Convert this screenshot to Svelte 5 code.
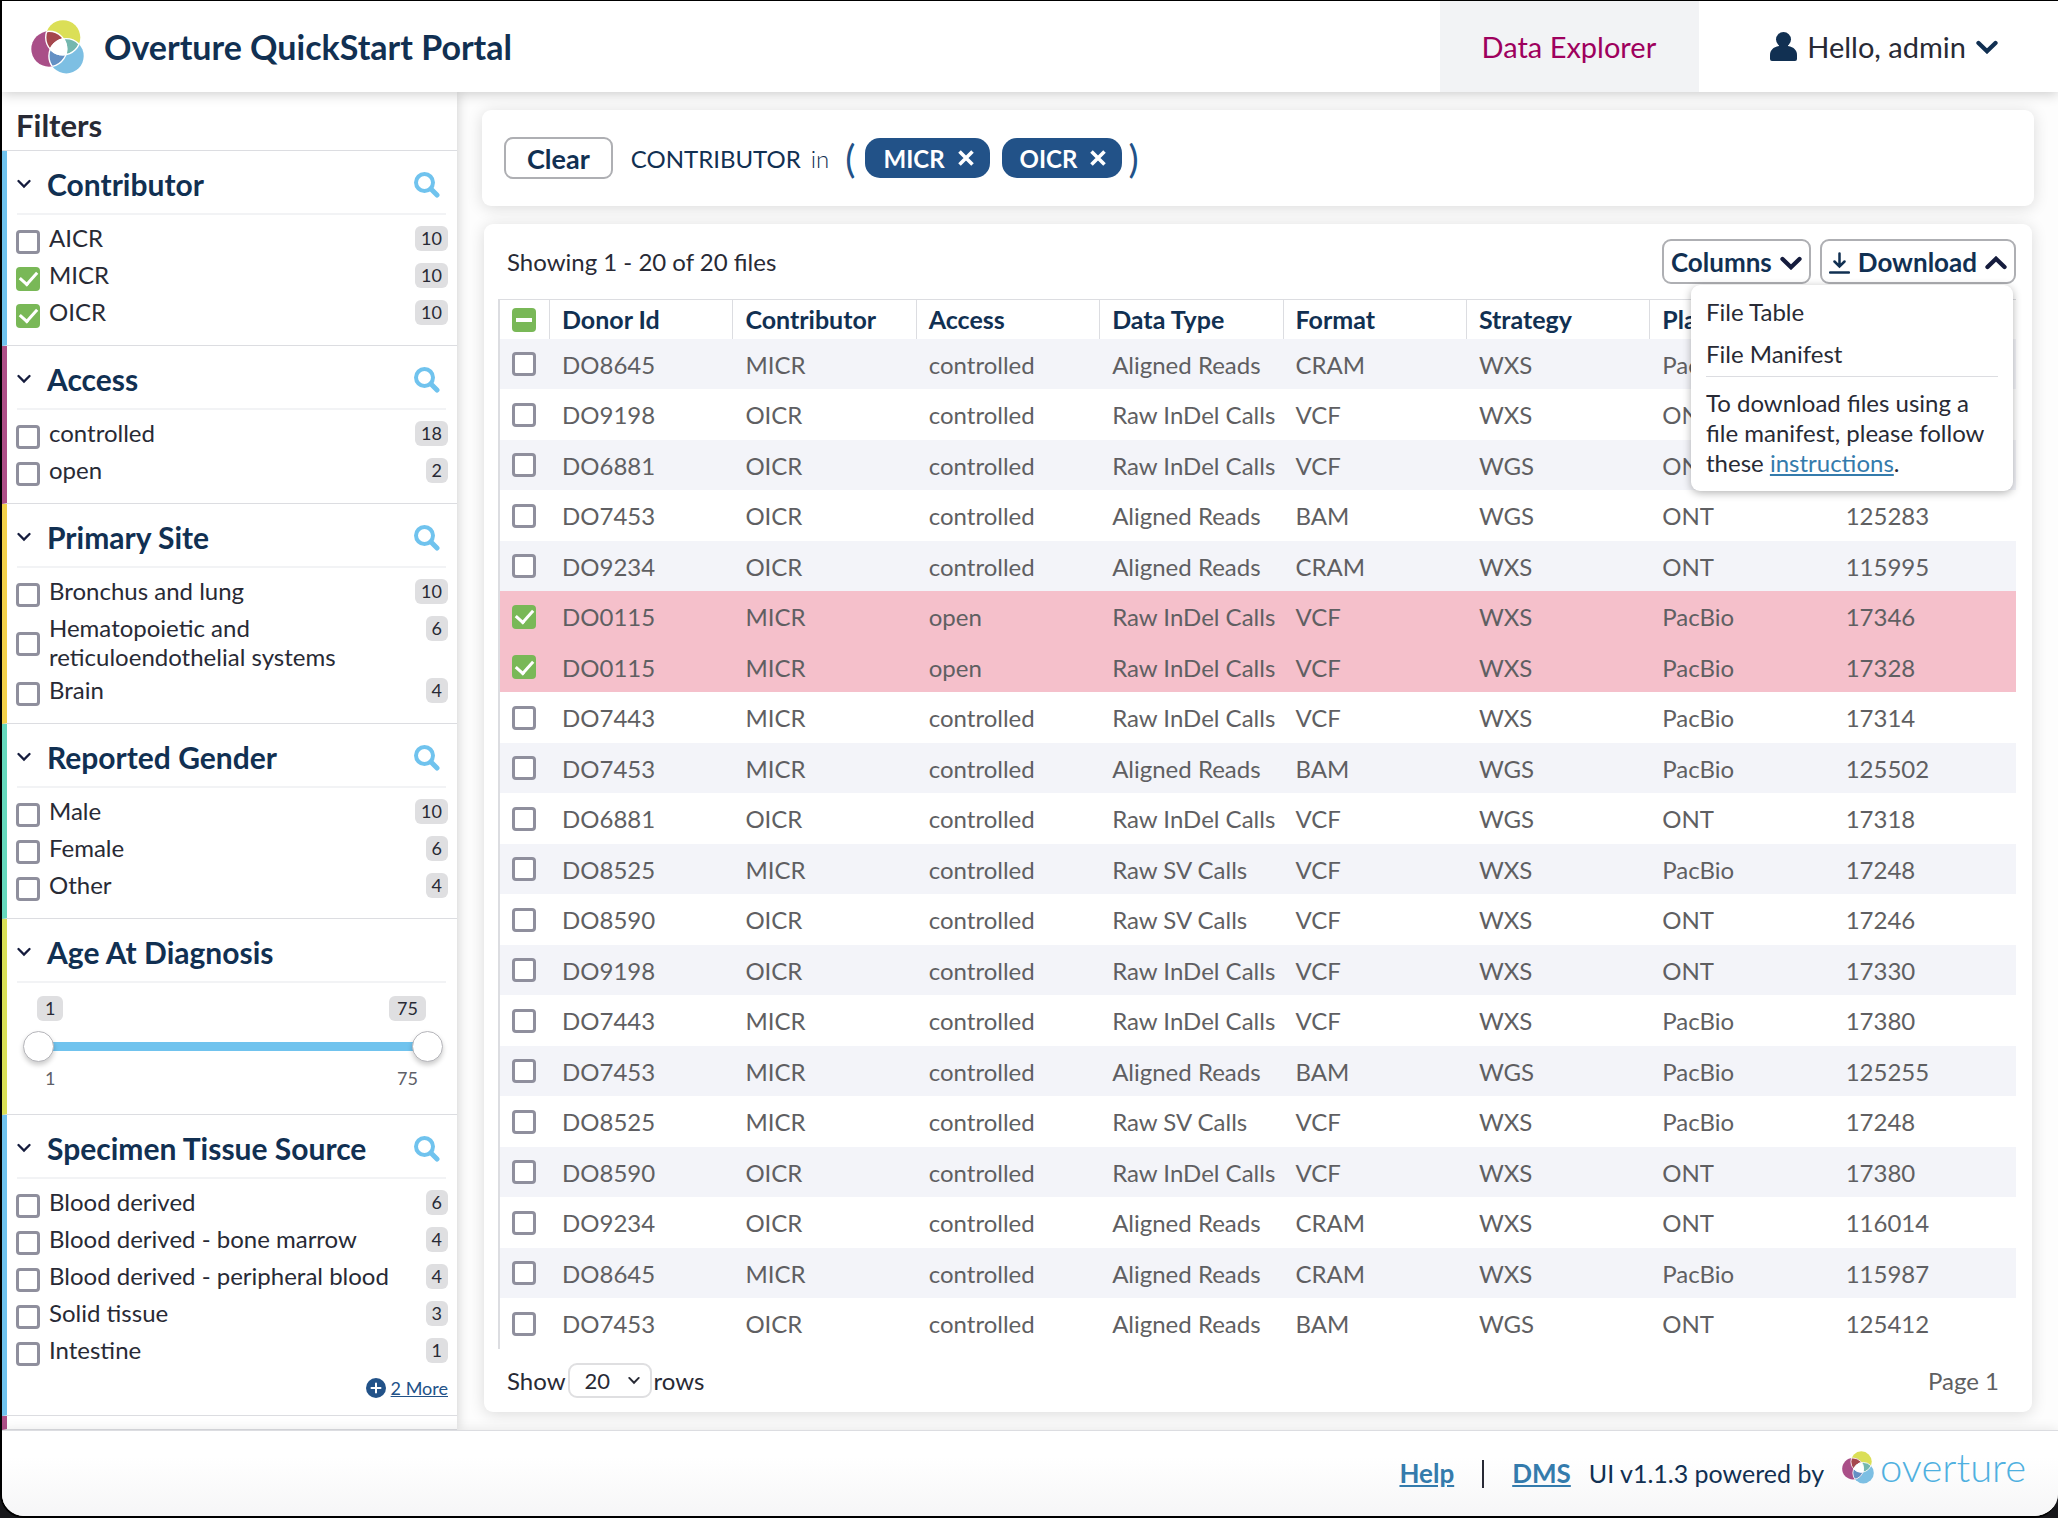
<script>
  const sections = [
    { name: 'Contributor', color: 'blue', items: [['AICR', 10, false], ['MICR', 10, true], ['OICR', 10, true]] },
    { name: 'Access', color: 'magenta', items: [['controlled', 18, false], ['open', 2, false]] },
    { name: 'Primary Site', color: 'gold', items: [['Bronchus and lung', 10, false], ['Hematopoietic and reticuloendothelial systems', 6, false], ['Brain', 4, false]] },
    { name: 'Reported Gender', color: 'teal', items: [['Male', 10, false], ['Female', 6, false], ['Other', 4, false]] },
    { name: 'Age At Diagnosis', color: 'lime', range: [1, 75] },
    { name: 'Specimen Tissue Source', color: 'blue', more: 2, items: [['Blood derived', 6, false], ['Blood derived - bone marrow', 4, false], ['Blood derived - peripheral blood', 4, false], ['Solid tissue', 3, false], ['Intestine', 1, false]] }
  ];

  const columns = ['Donor Id', 'Contributor', 'Access', 'Data Type', 'Format', 'Strategy', 'Platform', 'Size'];

  const rows = [
    ['DO8645', 'MICR', 'controlled', 'Aligned Reads', 'CRAM', 'WXS', 'PacBio', ''],
    ['DO9198', 'OICR', 'controlled', 'Raw InDel Calls', 'VCF', 'WXS', 'ONT', ''],
    ['DO6881', 'OICR', 'controlled', 'Raw InDel Calls', 'VCF', 'WGS', 'ONT', ''],
    ['DO7453', 'OICR', 'controlled', 'Aligned Reads', 'BAM', 'WGS', 'ONT', '125283'],
    ['DO9234', 'OICR', 'controlled', 'Aligned Reads', 'CRAM', 'WXS', 'ONT', '115995'],
    ['DO0115', 'MICR', 'open', 'Raw InDel Calls', 'VCF', 'WXS', 'PacBio', '17346'],
    ['DO0115', 'MICR', 'open', 'Raw InDel Calls', 'VCF', 'WXS', 'PacBio', '17328'],
    ['DO7443', 'MICR', 'controlled', 'Raw InDel Calls', 'VCF', 'WXS', 'PacBio', '17314'],
    ['DO7453', 'MICR', 'controlled', 'Aligned Reads', 'BAM', 'WGS', 'PacBio', '125502'],
    ['DO6881', 'OICR', 'controlled', 'Raw InDel Calls', 'VCF', 'WGS', 'ONT', '17318'],
    ['DO8525', 'MICR', 'controlled', 'Raw SV Calls', 'VCF', 'WXS', 'PacBio', '17248'],
    ['DO8590', 'OICR', 'controlled', 'Raw SV Calls', 'VCF', 'WXS', 'ONT', '17246'],
    ['DO9198', 'OICR', 'controlled', 'Raw InDel Calls', 'VCF', 'WXS', 'ONT', '17330'],
    ['DO7443', 'MICR', 'controlled', 'Raw InDel Calls', 'VCF', 'WXS', 'PacBio', '17380'],
    ['DO7453', 'MICR', 'controlled', 'Aligned Reads', 'BAM', 'WGS', 'PacBio', '125255'],
    ['DO8525', 'MICR', 'controlled', 'Raw SV Calls', 'VCF', 'WXS', 'PacBio', '17248'],
    ['DO8590', 'OICR', 'controlled', 'Raw InDel Calls', 'VCF', 'WXS', 'ONT', '17380'],
    ['DO9234', 'OICR', 'controlled', 'Aligned Reads', 'CRAM', 'WXS', 'ONT', '116014'],
    ['DO8645', 'MICR', 'controlled', 'Aligned Reads', 'CRAM', 'WXS', 'PacBio', '115987'],
    ['DO7453', 'OICR', 'controlled', 'Aligned Reads', 'BAM', 'WGS', 'ONT', '125412']
  ];

  let selected = $state(rows.map((r) => r[2] === 'open'));
  let some = $derived(selected.some(Boolean) && !selected.every(Boolean));
  let menuOpen = $state(true);
</script>

{#snippet logo(id)}
  <svg class="logo" viewBox="0 0 53 54" aria-hidden="true">
    <defs>
      <clipPath id="{id}-t"><circle cx="32" cy="17.500" r="17.300" /></clipPath>
      <clipPath id="{id}-l"><circle cx="18" cy="29" r="17.700" /></clipPath>
      <clipPath id="{id}-b"><circle cx="35.300" cy="36" r="17.400" /></clipPath>
    </defs>
    <circle cx="32" cy="17.500" r="17.300" fill="#dbdf57" />
    <circle cx="35.300" cy="36" r="17.400" fill="#7dbfe3" />
    <circle cx="18" cy="29" r="17.700" fill="#a94f88" />
    <circle cx="18" cy="29" r="17.700" fill="#a5474e" clip-path="url(#{id}-t)" />
    <circle cx="32" cy="17.500" r="17.300" fill="#74b7ae" clip-path="url(#{id}-b)" />
    <circle cx="35.300" cy="36" r="17.400" fill="#6490c4" clip-path="url(#{id}-l)" />
    <g clip-path="url(#{id}-t)">
      <circle cx="18" cy="29" r="17.700" fill="#fff" clip-path="url(#{id}-b)" />
    </g>
    <g fill="none" stroke="#fff" stroke-width="1.400">
      <g clip-path="url(#{id}-t)"><circle cx="18" cy="29" r="17.700" /><circle cx="35.300" cy="36" r="17.400" /></g>
      <g clip-path="url(#{id}-l)"><circle cx="32" cy="17.500" r="17.300" /><circle cx="35.300" cy="36" r="17.400" /></g>
      <g clip-path="url(#{id}-b)"><circle cx="32" cy="17.500" r="17.300" /><circle cx="18" cy="29" r="17.700" /></g>
    </g>
  </svg>
{/snippet}

{#snippet chevron(cls)}
  <svg class={cls} viewBox="0 0 22 14" aria-hidden="true"><path d="M2.500 3 11 11.200 19.500 3" fill="none" stroke="currentColor" stroke-width="4.300" stroke-linecap="round" stroke-linejoin="miter" /></svg>
{/snippet}

{#snippet thinChevron(cls)}
  <svg class={cls} viewBox="0 0 14 10" aria-hidden="true"><path d="M1.500 2 7 7.600 12.500 2" fill="none" stroke="currentColor" stroke-width="2.300" stroke-linecap="round" stroke-linejoin="miter" /></svg>
{/snippet}

<div class="app">
  <header class="topbar">
    <div class="brand">{@render logo('head')}<span>Overture QuickStart Portal</span></div>
    <nav>
      <a class="explorer" href="#explorer">Data Explorer</a>
      <button class="user" type="button">
        <svg class="person" viewBox="0 0 27 29" aria-hidden="true"><ellipse cx="13.500" cy="7.500" rx="7.500" ry="7.500" /><path d="M9 10h9v4c6 1 9 4.500 9 9v4q0 2-2 2H2q-2 0-2-2v-4c0-4.500 3-8 9-9z" /></svg>
        <span>Hello, admin</span>
        {@render chevron('chev')}
      </button>
    </nav>
  </header>

  <div class="body">
    <aside class="sidebar">
      <h2>Filters</h2>
      {#each sections as s}
        <section class="facet {s.color}">
          <div class="facet-head">
            <button class="toggle" type="button">{@render thinChevron('chev-small')}<span>{s.name}</span></button>
            {#if s.items}
              <button class="search" type="button" aria-label="Search {s.name}">
                <svg viewBox="0 0 26 26" aria-hidden="true"><circle cx="10.500" cy="10.500" r="8.500" fill="none" stroke="currentColor" stroke-width="4" /><path d="M17 17l6 6" stroke="currentColor" stroke-width="5" stroke-linecap="round" /></svg>
              </button>
            {/if}
          </div>
          {#if s.items}
            <div class="options">
              {#each s.items as [label, count, on]}
                <label class="option">
                  <input class="check" type="checkbox" checked={on} />
                  <span class="option-name">{label}</span>
                  <span class="badge">{count}</span>
                </label>
              {/each}
            </div>
          {:else}
            <div class="range">
              <div class="range-values"><span class="badge">{s.range[0]}</span><span class="badge">{s.range[1]}</span></div>
              <div class="slider">
                <input type="range" min="1" max="75" value="1" aria-label="Minimum age" />
                <input type="range" min="1" max="75" value="75" aria-label="Maximum age" />
              </div>
              <div class="range-ends"><span>{s.range[0]}</span><span>{s.range[1]}</span></div>
            </div>
          {/if}
          {#if s.more}
            <div class="more">
              <svg viewBox="0 0 20 20" aria-hidden="true"><circle cx="10" cy="10" r="10" fill="currentColor" /><path d="M10 5.500v9M5.500 10h9" stroke="#fff" stroke-width="2" stroke-linecap="round" /></svg>
              <a href="#more">{s.more} More</a>
            </div>
          {/if}
        </section>
      {/each}
      <section class="facet magenta next"></section>
    </aside>

    <main>
      <div class="card query">
        <button class="btn clear" type="button">Clear</button>
        <span class="field">CONTRIBUTOR</span>
        <span class="op">in</span>
        <span class="paren">(</span>
        {#each ['MICR', 'OICR'] as v}
          <button class="chip" type="button">
            {v}
            <svg viewBox="0 0 16 16" aria-hidden="true"><path d="M1.500 1.500l13 13M14.500 1.500l-13 13" stroke="#fff" stroke-width="3.600" /></svg>
          </button>
        {/each}
        <span class="paren">)</span>
      </div>

      <div class="card results">
        <div class="toolbar">
          <span>Showing 1 - 20 of 20 files</span>
          <div class="actions">
            <button class="btn tool" type="button">Columns {@render chevron('chev')}</button>
            <div class="dropdown">
              <button class="btn tool" type="button" onclick={() => (menuOpen = !menuOpen)}>
                <svg class="down" viewBox="0 0 21 22" aria-hidden="true"><path d="M10.500 1.500v12M5.500 9.500l5 5 5-5M1 20.500h19" fill="none" stroke="currentColor" stroke-width="2.500" stroke-linecap="round" /></svg>
                Download {@render chevron('chev up')}
              </button>
              {#if menuOpen}
                <div class="menu">
                  <button type="button">File Table</button>
                  <button type="button">File Manifest</button>
                  <p>To download files using a file manifest, please follow these <a href="#instructions">instructions</a>.</p>
                </div>
              {/if}
            </div>
          </div>
        </div>

        <table>
          <thead>
            <tr>
              <th class="pick"><input class="check" type="checkbox" indeterminate={some} aria-label="Select all rows" /></th>
              {#each columns as c}<th>{c}</th>{/each}
            </tr>
          </thead>
          <tbody>
            {#each rows as r, i}
              <tr class:selected={selected[i]}>
                <td class="pick"><input class="check" type="checkbox" bind:checked={selected[i]} aria-label="Select row {i + 1}" /></td>
                {#each r as cell}<td>{cell}</td>{/each}
              </tr>
            {/each}
          </tbody>
        </table>

        <div class="pager">
          <label>Show
            <span class="select">
              <select><option>20</option><option>50</option><option>100</option></select>
              {@render thinChevron('chev-tiny')}
            </span>
            rows</label>
          <span class="page">Page 1</span>
        </div>
      </div>
    </main>
  </div>

  <footer>
    <a href="#help">Help</a>
    <span class="bar"></span>
    <a href="#dms">DMS</a>
    <span class="version">UI v1.1.3 powered by</span>
    <span class="powered">{@render logo('foot')}<span>overture</span></span>
  </footer>
</div>

<style>
  :global(body) {
    background: #17171a;
  }
  .app {
    box-sizing: border-box;
    min-height: 100vh;
    display: flex;
    flex-direction: column;
    border: solid #000;
    border-width: 1px 0 2px 2px;
    border-radius: 0 0 24px 24px;
    overflow: hidden;
    background: #fff;
    font-family: Lato, 'Liberation Sans', sans-serif;
    font-size: 24px;
    line-height: 29px;
    color: #282a35;
  }
  .app * {
    box-sizing: border-box;
  }
  button {
    font: inherit;
    color: inherit;
    background: none;
    border: 0;
    padding: 0;
    cursor: pointer;
  }
  svg {
    display: block;
    flex: none;
  }
  h2,
  p {
    margin: 0;
  }

  .topbar {
    position: relative;
    z-index: 2;
    display: flex;
    justify-content: space-between;
    height: 91px;
    background: #fff;
    box-shadow: 0 2px 12px rgba(0, 0, 0, 0.2);
  }
  .brand {
    display: flex;
    align-items: center;
    gap: 20px;
    padding-left: 29px;
    font-size: 34px;
    font-weight: 700;
    color: #113052;
  }
  .brand .logo {
    width: 53px;
    height: 54px;
  }
  nav {
    display: flex;
    font-size: 29px;
  }
  .explorer {
    display: flex;
    align-items: center;
    padding: 0 43px 0 42px;
    background: #f2f3f5;
    color: #9e005d;
    text-decoration: none;
  }
  .user {
    display: flex;
    align-items: center;
    gap: 10px;
    padding: 0 60px 0 71px;
  }
  .person {
    width: 27px;
    height: 29px;
    fill: #113052;
  }
  .chev {
    width: 22px;
    height: 14px;
  }
  .user .chev {
    color: #113052;
  }
  .up {
    rotate: 180deg;
  }

  .body {
    flex: 1;
    display: flex;
  }
  .sidebar {
    position: relative;
    z-index: 1;
    flex: none;
    width: 455px;
    overflow: hidden;
    background: #fff;
    box-shadow: 0 0 12px rgba(0, 0, 0, 0.2);
  }
  h2 {
    height: 59px;
    padding: 15px 14px 0;
    border-bottom: 1px solid #dcdde1;
    font-size: 31px;
    line-height: 36px;
  }
  .facet {
    border-left: 5px solid;
    border-bottom: 1px solid #dcdde1;
    padding: 0 9px 11px 9px;
  }
  .blue {
    border-left-color: #70c3ee;
  }
  .magenta {
    border-left-color: #ae4f87;
  }
  .gold {
    border-left-color: #f2d04a;
  }
  .teal {
    border-left-color: #66d9bd;
  }
  .lime {
    border-left-color: #d9df56;
  }
  .next {
    padding-bottom: 13px;
  }
  .facet-head {
    display: flex;
    align-items: center;
    justify-content: space-between;
    height: 64px;
    margin: 0 2px 0 1px;
    padding: 4px 6px 0 0;
    border-bottom: 2px solid #f2f3f5;
  }
  .toggle {
    display: flex;
    align-items: center;
    gap: 16px;
    font-size: 30px;
    font-weight: 700;
    color: #113052;
  }
  .chev-small {
    width: 14px;
    height: 10px;
    color: #151c3d;
  }
  .search {
    padding-top: 2px;
    color: #70c3ee;
  }
  .search svg {
    width: 26px;
    height: 26px;
  }
  .options {
    padding-top: 8px;
  }
  .option {
    display: flex;
    align-items: flex-start;
    min-height: 37px;
  }
  .option .check {
    align-self: center;
    margin-right: 9px;
  }
  .option-name {
    flex: 1;
    max-width: 340px;
    margin-right: auto;
    padding-bottom: 4px;
  }
  .badge {
    padding: 0 6px;
    border-radius: 6px;
    background: #dfdfe1;
    font-size: 18px;
    line-height: 25px;
  }
  .option .badge {
    margin: 3px 0 0 auto;
  }
  .check {
    appearance: none;
    flex: none;
    display: block;
    width: 24px;
    height: 24px;
    margin: 0;
    border: 3px solid #8f8f9d;
    border-radius: 4px;
    background: #fff;
  }
  .check:checked,
  .check:indeterminate {
    display: grid;
    place-items: center;
    border: 0;
    background: #79b857;
  }
  .check:checked::after {
    content: '';
    width: 8px;
    height: 14px;
    margin-bottom: 4px;
    border: solid #fff;
    border-width: 0 3px 3px 0;
    rotate: 42deg;
  }
  .check:indeterminate::after {
    content: '';
    width: 16px;
    height: 4px;
    background: #fff;
  }

  .range {
    height: 120px;
    padding-top: 13px;
    font-size: 18px;
  }
  .range-values,
  .range-ends {
    display: flex;
    justify-content: space-between;
    padding: 0 22px 0 21px;
  }
  .range-values .badge {
    padding: 0 8px;
  }
  .range-ends {
    padding: 0 30px 0 29px;
    margin-top: 2px;
    color: #5e6068;
  }
  .slider {
    display: grid;
    align-items: center;
    height: 31px;
    margin: 10px 5px 0 7px;
    background: linear-gradient(#70c3ee, #70c3ee) center / 96% 9px no-repeat;
  }
  .slider input {
    grid-area: 1 / 1;
    appearance: none;
    width: 100%;
    height: 31px;
    margin: 0;
    background: none;
    pointer-events: none;
  }
  .slider input::-webkit-slider-thumb {
    appearance: none;
    width: 31px;
    height: 31px;
    border: 1px solid #b5b5ba;
    border-radius: 50%;
    background: #fff;
    box-shadow: 0 3px 5px rgba(0, 0, 0, 0.2);
    pointer-events: auto;
  }
  .more {
    display: flex;
    align-items: center;
    justify-content: flex-end;
    gap: 5px;
    height: 32px;
    font-size: 18px;
    color: #225288;
  }
  .more svg {
    width: 20px;
    height: 20px;
  }
  .more a {
    color: inherit;
  }

  main {
    flex: 1;
    min-width: 0;
    display: flex;
    flex-direction: column;
    gap: 18px;
    padding: 18px 24px 18px 25px;
    background: #fdfdfd;
  }
  .card {
    border-radius: 9px;
    background: #fff;
    box-shadow: 0 2px 16px rgba(0, 0, 0, 0.14);
  }
  .query {
    display: flex;
    align-items: center;
    height: 96px;
    padding: 0 22px;
    color: #113052;
  }
  .btn {
    display: flex;
    align-items: center;
    border: 2px solid #aeafb3;
    border-radius: 9px;
    background: #fff;
    font-size: 26px;
    font-weight: 700;
    color: #113052;
  }
  .clear {
    height: 42px;
    padding: 0 21px;
    margin-right: 18px;
    font-size: 27px;
  }
  .op {
    margin: 0 14px 0 10px;
    font-weight: 300;
  }
  .paren {
    padding: 0 2px;
    font-size: 38px;
    color: #225288;
  }
  .chip {
    display: flex;
    align-items: center;
    gap: 13px;
    height: 40px;
    margin: 0 4px 0 8px;
    padding: 0 16px 0 18px;
    border-radius: 15px;
    background: #225288;
    color: #fff;
    font-weight: 700;
  }
  .chip svg {
    width: 16px;
    height: 16px;
  }
  .results {
    flex: 1;
    margin: 0 2px;
    padding: 15px 16px 0 14px;
  }
  .toolbar {
    display: flex;
    align-items: center;
    justify-content: space-between;
    height: 45px;
    padding-left: 9px;
  }
  .actions {
    display: flex;
    gap: 9px;
  }
  .tool {
    height: 45px;
    gap: 8px;
    padding: 2px 7px 0;
  }
  .tool .chev {
    color: #151c3d;
  }
  .down {
    width: 21px;
    height: 22px;
  }
  .dropdown {
    position: relative;
  }
  .menu {
    position: absolute;
    top: 46px;
    right: 3px;
    z-index: 3;
    width: 322px;
    padding: 7px 15px 13px;
    border-radius: 9px;
    background: #fff;
    box-shadow: 0 2px 8px rgba(0, 0, 0, 0.3);
  }
  .menu button {
    display: block;
    width: 100%;
    height: 42px;
    padding-bottom: 3px;
    text-align: left;
  }
  .menu p {
    padding-top: 11px;
    border-top: 1px solid #dcdde1;
    line-height: 30px;
  }
  .menu a,
  footer a {
    color: #347bac;
  }

  table {
    width: 100%;
    margin-top: 15px;
    border-collapse: separate;
    border-spacing: 0;
    border-left: 2px solid #dcdde1;
    border-top: 1px solid #dcdde1;
    table-layout: fixed;
    color: #5f5f62;
  }
  th,
  td {
    padding: 0 0 0 13px;
    text-align: left;
    white-space: nowrap;
  }
  th {
    height: 39px;
    padding-left: 12px;
    border-left: 1px solid #dcdde1;
    font-size: 25px;
    color: #113052;
  }
  .pick {
    width: 49px;
    padding-left: 12px;
    border: 0;
  }
  td {
    height: 50px;
  }
  tr:nth-child(even) td {
    height: 51px;
  }
  tbody tr:nth-child(odd) {
    background: #f3f4f9;
  }
  tbody tr.selected {
    background: #f5c0cb;
  }
  .pager {
    display: flex;
    align-items: center;
    justify-content: space-between;
    height: 63px;
    padding: 0 17px 0 9px;
  }
  .pager label {
    display: flex;
    align-items: center;
    gap: 2px;
  }
  .select {
    display: grid;
    align-items: center;
  }
  .select select {
    grid-area: 1 / 1;
    appearance: none;
    width: 84px;
    height: 35px;
    padding: 0 15px;
    border: 2px solid #dfdfe1;
    border-radius: 9px;
    background: #fff;
    font: inherit;
    font-size: 22px;
    color: inherit;
  }
  .select svg {
    grid-area: 1 / 1;
    justify-self: end;
    margin-right: 12px;
    pointer-events: none;
  }
  .chev-tiny {
    width: 12px;
    height: 9px;
  }
  .page {
    color: #5f5f62;
  }

  footer {
    position: relative;
    z-index: 2;
    display: flex;
    align-items: center;
    justify-content: flex-end;
    height: 86px;
    padding-right: 32px;
    border-top: 1px solid #dcdde1;
    background: linear-gradient(#fff 30%, #f6f6f7);
    box-shadow: 0 0 12px rgba(0, 0, 0, 0.1);
    font-size: 25px;
    color: #113052;
  }
  footer a {
    font-size: 26px;
    font-weight: 700;
  }
  .bar {
    width: 2px;
    height: 28px;
    margin: 0 28px;
    background: #282a35;
  }
  .version {
    margin: 0 18px;
  }
  .powered {
    display: flex;
    align-items: center;
    gap: 6px;
    padding-bottom: 12px;
    font-size: 40px;
    font-weight: 300;
    color: #4fb0e0;
  }
  .powered .logo {
    width: 32px;
    height: 33px;
  }
</style>
